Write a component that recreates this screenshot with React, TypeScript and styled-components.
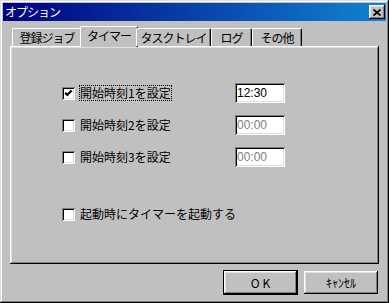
import React from "react";
import styled, { createGlobalStyle } from "styled-components";

const GlobalStyle = createGlobalStyle`
  html, body {
    margin: 0;
    padding: 0;
    background: #c0c0c0;
  }
  body {
    font-family: "Noto Sans CJK JP", "Noto Sans", sans-serif;
    font-size: 12px;
    color: #000;
  }
  * {
    box-sizing: border-box;
  }
`;

const tabs = [
  { label: "登録ジョブ", width: 70 },
  { label: "タイマー", width: 54, active: true },
  { label: "タスクトレイ", width: 75 },
  { label: "ログ", width: 41 },
  { label: "その他", width: 50 },
];

const timers = [
  { label: "開始時刻1を設定", time: "12:30", checked: true, enabled: true },
  { label: "開始時刻2を設定", time: "00:00", checked: false, enabled: false },
  { label: "開始時刻3を設定", time: "00:00", checked: false, enabled: false },
];

const Options = () => {
  return (
    <>
      <GlobalStyle />
      <Window>
        <TitleBar>
          <TitleText>オプション</TitleText>
          <CloseButton>
            <svg width="8" height="7" viewBox="0 0 8 7">
              <path d="M0.5 0.5 L7.5 6.5 M7.5 0.5 L0.5 6.5" stroke="#000" strokeWidth="1.7" />
            </svg>
          </CloseButton>
        </TitleBar>
        <Body>
          <TabRow>
            {tabs.map((t) => (
              <Tab key={t.label} $width={t.width} $active={t.active}>
                {t.label}
              </Tab>
            ))}
          </TabRow>
          <Panel>
            <TimerList>
              {timers.map((t, i) => (
                <TimerRow key={t.label}>
                  <CheckField>
                    <Box>
                      {t.checked && (
                        <svg width="13" height="13" viewBox="0 0 13 13">
                          <polyline points="3.2,5.8 5.3,8 9.6,3.6" fill="none" stroke="#000" strokeWidth="2.2" />
                        </svg>
                      )}
                    </Box>
                    <Label $focused={i === 0}>{t.label}</Label>
                  </CheckField>
                  <TimeBox $enabled={t.enabled}>{t.time}</TimeBox>
                </TimerRow>
              ))}
            </TimerList>
            <StartupRow>
              <CheckField>
                <Box />
                <Label>起動時にタイマーを起動する</Label>
              </CheckField>
            </StartupRow>
          </Panel>
          <ButtonRow>
            <Button $default>
              <OkText>OK</OkText>
            </Button>
            <Button>ｷｬﾝｾﾙ</Button>
          </ButtonRow>
        </Body>
      </Window>
    </>
  );
};

const Window = styled.div`
  width: 389px;
  height: 303px;
  padding: 3px;
  background: #c0c0c0;
  box-shadow: inset -1px -1px #000, inset 1px 1px #dfdfdf, inset -2px -2px #808080,
    inset 2px 2px #fff;
  display: flex;
  flex-direction: column;
`;

const TitleBar = styled.div`
  height: 18px;
  display: flex;
  align-items: center;
  justify-content: space-between;
  padding: 0 1px 0 2px;
  background: linear-gradient(90deg, #000080, #1084d0);
  color: #fff;
`;

const TitleText = styled.span`
  line-height: 16px;
  letter-spacing: -1px;
`;

const CloseButton = styled.div`
  width: 16px;
  height: 14px;
  display: flex;
  align-items: center;
  justify-content: center;
  background: #c0c0c0;
  box-shadow: inset -1px -1px #000, inset 1px 1px #fff, inset -2px -2px #808080,
    inset 2px 2px #dfdfdf;
`;

const Body = styled.div`
  display: flex;
  flex-direction: column;
  padding: 5px 7px 0 7px;
`;

const TabRow = styled.div`
  height: 20px;
  display: flex;
  align-items: flex-end;
  padding-left: 2px;
  position: relative;
  z-index: 1;
`;

const Tab = styled.div<{ $width: number; $active?: boolean }>`
  width: ${(p) => p.$width + (p.$active ? 4 : 0)}px;
  height: ${(p) => (p.$active ? 21 : 18)}px;
  margin: 0 ${(p) => (p.$active ? -2 : 0)}px ${(p) => (p.$active ? -1 : 0)}px;
  padding-top: 1px;
  background: #c0c0c0;
  border-top: 1px solid #fff;
  border-left: 1px solid #fff;
  border-right: 1px solid #000;
  border-radius: 2px 2px 0 0;
  box-shadow: inset -1px 0 #808080;
  line-height: 16px;
  letter-spacing: -1px;
  text-align: center;
  white-space: nowrap;
`;

const Panel = styled.div`
  width: 369px;
  height: 218px;
  padding: 37px 0 0 52px;
  background: #c0c0c0;
  box-shadow: inset -1px -1px #000, inset 1px 1px #fff, inset -2px -2px #808080,
    inset 2px 2px #dfdfdf;
`;

const TimerList = styled.div`
  display: flex;
  flex-direction: column;
  gap: 12px;
`;

const TimerRow = styled.div`
  height: 20px;
  display: grid;
  grid-template-columns: 173px 50px;
  align-items: center;
`;

const CheckField = styled.div`
  display: flex;
  align-items: center;
  gap: 5px;
`;

const Box = styled.div`
  width: 13px;
  height: 13px;
  flex: none;
  background: #fff;
  box-shadow: inset 1px 1px #808080, inset -1px -1px #fff, inset 2px 2px #000,
    inset -2px -2px #dfdfdf;
  svg {
    display: block;
  }
`;

const Label = styled.span<{ $focused?: boolean }>`
  line-height: 14px;
  white-space: nowrap;
  outline: ${(p) => (p.$focused ? "1px dotted #000" : "none")};
`;

const TimeBox = styled.div<{ $enabled?: boolean }>`
  width: 50px;
  height: 20px;
  padding: 2px 0 0 2px;
  background: #fff;
  box-shadow: inset 1px 1px #808080, inset -1px -1px #fff, inset 2px 2px #000,
    inset -2px -2px #dfdfdf;
  font-family: "Liberation Sans", Arial, sans-serif;
  font-size: 12px;
  line-height: 16px;
  color: ${(p) => (p.$enabled ? "#000" : "#808080")};
`;

const StartupRow = styled.div`
  height: 20px;
  margin-top: 37px;
  display: flex;
  align-items: center;
`;

const ButtonRow = styled.div`
  display: flex;
  justify-content: flex-end;
  align-items: center;
  gap: 6px;
  padding: 6px 1px 0 0;
`;

const Button = styled.div<{ $default?: boolean }>`
  width: ${(p) => (p.$default ? 75 : 74)}px;
  height: ${(p) => (p.$default ? 25 : 23)}px;
  border: ${(p) => (p.$default ? "1px solid #000" : "none")};
  display: flex;
  align-items: center;
  justify-content: center;
  background: #c0c0c0;
  box-shadow: inset -1px -1px #000, inset 1px 1px #fff, inset -2px -2px #808080,
    inset 2px 2px #dfdfdf;
  line-height: 16px;
  white-space: nowrap;
`;

const OkText = styled.span`
  letter-spacing: 3px;
  margin-right: -3px;
`;

export default Options;
